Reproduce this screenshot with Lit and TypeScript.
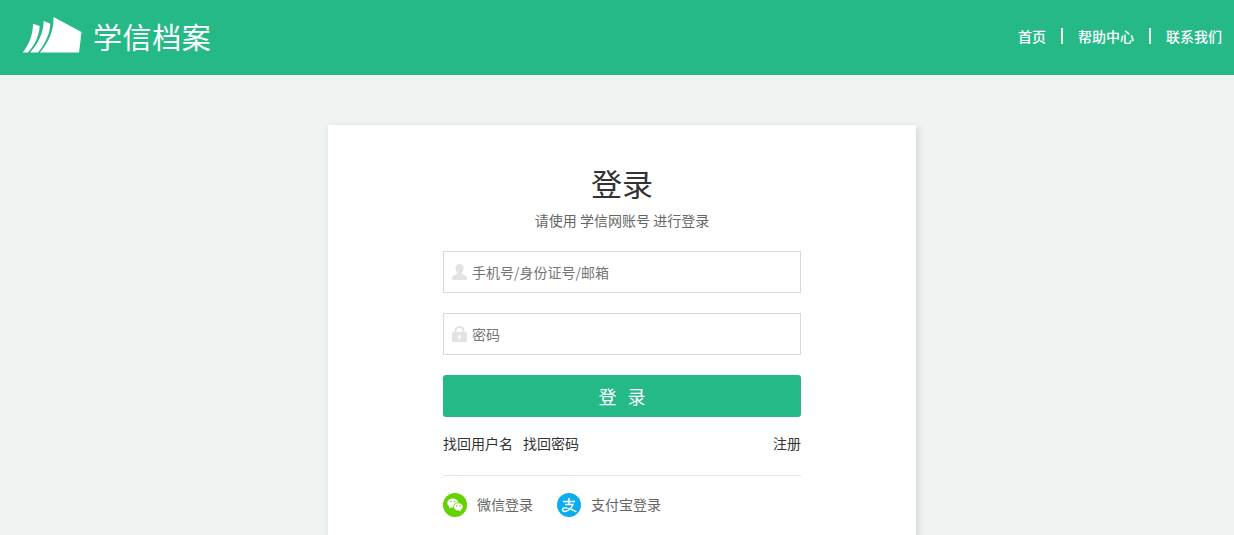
import { LitElement, html, css } from "lit";
import { customElement } from "lit/decorators.js";

@customElement("app-root")
export class AppRoot extends LitElement {
  static styles = css`
    :host {
      display: block;
      height: 535px;
      overflow: hidden;
      background: #eff3f2;
      font-family: "Noto Sans CJK SC", "Liberation Sans", sans-serif;
    }
    * { box-sizing: border-box; }
    .top {
      height: 75px;
      background: #26b988;
      display: flex;
      align-items: center;
      justify-content: space-between;
      padding: 0 12px 0 22px;
    }
    .brand { display: flex; align-items: center; gap: 11px; margin-bottom: 5px; }
    .brand svg { display: block; }
    .brand-name {
      color: #fff;
      font-size: 29px;
      font-weight: 400;
      line-height: 40px;
      letter-spacing: 0.6px;
      margin-top: 2px;
    }
    .nav { display: flex; align-items: center; color: #fff; font-size: 14px; font-weight: 500; margin-bottom: 4px; }
    .nav span { line-height: 20px; }
    .sep { width: 2px; height: 16px; background: #f3f6d8; margin: 0 15px; }
    .card {
      width: 588px;
      margin: 50px 0 0 328px;
      height: 600px;
      background: #fff;
      box-shadow: 2px 2px 8px rgba(0, 0, 0, 0.12);
      padding: 36px 115px 0;
    }
    h1 {
      margin: 0;
      text-align: center;
      font-size: 31px;
      font-weight: 400;
      line-height: 44px;
      color: #333;
    }
    .sub {
      margin-top: 5px;
      text-align: center;
      font-size: 14px;
      line-height: 20px;
      color: #666;
    }
    .field {
      height: 42px;
      border: 1px solid #d9d9d9;
      display: flex;
      align-items: center;
      padding-left: 8px;
      gap: 5px;
      font-size: 14px;
      color: #757575;
      margin-top: 20px;
    }
    .field svg { display: block; flex: none; }
    .first { margin-top: 21px; }
    .btn {
      margin-top: 20px;
      height: 42px;
      border-radius: 3px;
      background: #26b988;
      color: #fff;
      font-size: 18px;
      font-weight: 400;
      word-spacing: 7px;
      display: flex;
      align-items: center;
      justify-content: center;
    }
    .links {
      margin-top: 16px;
      display: flex;
      justify-content: space-between;
      font-size: 14px;
      line-height: 20px;
      color: #333;
    }
    .links div { display: flex; gap: 10px; }
    .divider { height: 1px; background: #e5e5e5; margin-top: 22px; }
    .social {
      margin-top: 17px;
      display: flex;
      align-items: center;
      font-size: 14px;
      color: #666;
    }
    .social svg { display: block; flex: none; }
    .social span { margin-left: 10px; margin-right: 24px; line-height: 22px; margin-bottom: 2px; }
  `;

  render() {
    return html`
      <header class="top">
        <div class="brand">
          <svg width="60" height="38" viewBox="0 0 60 38">
            <path fill="#fff" d="M31.500 1 L59.500 16 C58.500 23 58 30 57 36.500 L18 36.500 C26 27 32 15 31.500 1 Z" />
            <path fill="#fff" d="M21.700 5 L28.300 7.700 C28 18 23 28 16 36.500 L8 36.500 C15 29 21.500 18 21.700 5 Z" />
            <path fill="#fff" d="M11 7.700 L17.700 10 C17 20 13 29 6 36.500 L0.700 36.500 C6 30 11 20 11 7.700 Z" />
          </svg>
          <span class="brand-name">学信档案</span>
        </div>
        <nav class="nav">
          <span>首页</span><i class="sep"></i><span>帮助中心</span><i class="sep"></i><span>联系我们</span>
        </nav>
      </header>
      <main class="card">
        <h1>登录</h1>
        <div class="sub">请使用 学信网账号 进行登录</div>
        <div class="field first">
          <svg width="15" height="16" viewBox="0 0 15 16">
            <path fill="#e3e3e3" d="M7.500 0 C10 0 11.500 2 11.500 4.500 C11.500 6.500 10.500 8 9.500 9 C9.500 10.500 15 11 15 14 L15 16 L0 16 L0 14 C0 11 5.500 10.500 5.500 9 C4.500 8 3.500 6.500 3.500 4.500 C3.500 2 5 0 7.500 0 Z" />
          </svg>
          <span>手机号/身份证号/邮箱</span>
        </div>
        <div class="field">
          <svg width="15" height="16" viewBox="0 0 15 16">
            <path fill="#e3e3e3" fill-rule="evenodd" d="M2.500 6 L2.500 5 C2.500 2 4.500 0 7.500 0 C10.500 0 12.500 2 12.500 5 L12.500 6 L13.500 6 C14.500 6 15 6.500 15 7.500 L15 14.500 C15 15.500 14.500 16 13.500 16 L1.500 16 C0.500 16 0 15.500 0 14.500 L0 7.500 C0 6.500 0.500 6 1.500 6 Z M4.500 6 L10.500 6 L10.500 5 C10.500 3 9.300 2 7.500 2 C5.700 2 4.500 3 4.500 5 Z M7.500 9 C6.700 9 6 9.700 6 10.500 C6 11.100 6.300 11.500 6.800 11.800 L6.800 13.500 L8.200 13.500 L8.200 11.800 C8.700 11.500 9 11.100 9 10.500 C9 9.700 8.300 9 7.500 9 Z" />
          </svg>
          <span>密码</span>
        </div>
        <div class="btn">登 录</div>
        <div class="links">
          <div><span>找回用户名</span><span>找回密码</span></div>
          <span>注册</span>
        </div>
        <div class="divider"></div>
        <div class="social">
          <svg width="24" height="24" viewBox="0 0 24 24">
            <circle cx="12" cy="12" r="12" fill="#64d100" />
            <ellipse cx="9.800" cy="10" rx="5.500" ry="4.600" fill="#fff" />
            <path fill="#fff" d="M6.500 13 L6.200 15.500 L9 14.300 Z" />
            <ellipse cx="15.300" cy="13.800" rx="4.800" ry="4" fill="#fff" stroke="#64d100" stroke-width="0.800" />
            <path fill="#fff" d="M17 17 L18 18.800 L15.500 17.600 Z" />
            <circle cx="8" cy="8.600" r="0.800" fill="#64d100" />
            <circle cx="11.500" cy="8.600" r="0.800" fill="#64d100" />
            <circle cx="13.800" cy="13" r="0.700" fill="#64d100" />
            <circle cx="17" cy="13" r="0.700" fill="#64d100" />
          </svg>
          <span>微信登录</span>
          <svg width="24" height="24" viewBox="0 0 24 24">
            <circle cx="12" cy="12" r="12" fill="#0cadee" />
            <path fill="none" stroke="#fff" stroke-width="1.400" d="M6 8.500 L18 8.500 M12 5 L12 11.500 M8 11.500 L16 11.500 C14.500 15.500 11 18.500 7.500 18.500 C5 18.500 4.800 15.500 7 15 C10.500 14.300 15 16.500 19.500 19" />
          </svg>
          <span>支付宝登录</span>
        </div>
      </main>
    `;
  }
}
